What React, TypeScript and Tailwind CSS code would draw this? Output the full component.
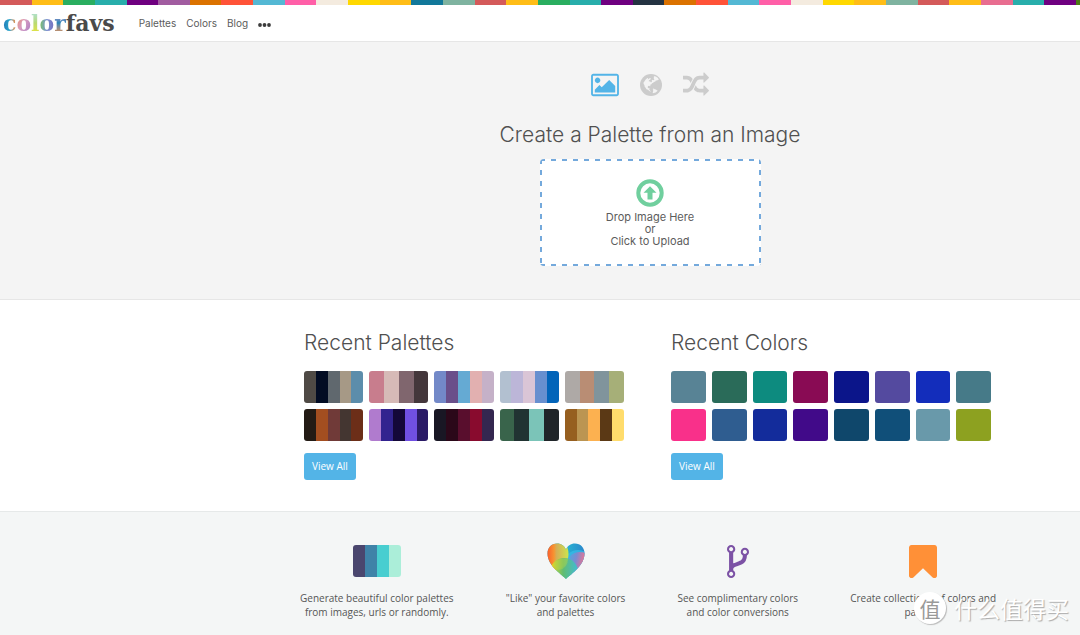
import type { ReactNode } from "react";

const stripe = [
  "#d45a5a", "#ffbd17", "#2aae60", "#28aeab", "#6f0080", "#a15ca0", "#db7200", "#ff5338", "#54b8d4",
  "#ff5fa8", "#f4ebdf", "#ffd800", "#ffbd17", "#12789a", "#7fb3a0", "#d45a5a", "#ffbd17", "#2aae60",
  "#28aeab", "#6f0080", "#243342", "#db7200", "#ff5338", "#54b8d4", "#ff5fa8", "#f4ebdf", "#ffd800",
  "#ffbd17", "#7fb3a0", "#d45a5a", "#ffbd17", "#e86d90", "#28aeab", "#6f0080",
];

const palettes = [
  ["#4f4a45", "#020c23", "#60686e", "#a69986", "#5c8dab"],
  ["#c87d8d", "#d6bab7", "#80666e", "#44373b"],
  ["#7389c8", "#6a4f8a", "#65aad3", "#e2b0b0", "#c5b1c8"],
  ["#b2c0d0", "#bcb6d8", "#dac5d6", "#678fcf", "#0264b9"],
  ["#aea9a6", "#b98d74", "#80949c", "#a6af78"],
  ["#231b15", "#a34e20", "#703a38", "#443631", "#6c2e18"],
  ["#b07bce", "#32238f", "#140839", "#7050e3", "#2a1a66"],
  ["#191724", "#2b0819", "#590e2d", "#890b2e", "#342750"],
  ["#39644b", "#213332", "#7bc4b8", "#202529"],
  ["#965f20", "#bb9552", "#fcb150", "#5b3915", "#ffdc6c"],
];

const colors = [
  "#588395", "#2a6b59", "#0d8b7f", "#890b54", "#0b158a", "#544a9f", "#132dbb", "#467a88",
  "#f9308a", "#2f5d90", "#132c9b", "#410a89", "#0f476b", "#104f79", "#6999aa", "#8da120",
];

const logoLetters = [
  { char: "c", fill: "bg-linear-to-r from-[#2479b8] via-[#29a5c9] to-[#f48a24]" },
  { char: "o", fill: "bg-linear-to-br from-[#f48a24] via-[#d79bc0] to-[#a477c4]" },
  { char: "l", fill: "bg-linear-to-b from-[#aee0df] via-[#b9da72] to-[#eee51d]" },
  { char: "o", fill: "bg-linear-to-r from-[#7dc544] via-[#7b92d0] to-[#7671c0]" },
  { char: "r", fill: "bg-linear-to-b from-[#c499d2] via-[#2283b7] to-[#f68a1f]" },
];

const PictureIcon = () => (
  <svg viewBox="0 0 1920 1792" className="h-[26px] w-7" fill="currentColor" aria-hidden="true">
    <path d="M640 576q0 80-56 136t-136 56-136-56-56-136 56-136 136-56 136 56 56 136zm1024 384v448h-1408v-192l320-320 160 160 512-512zm96-704h-1600q-13 0-22.500 9.500t-9.500 22.500v1216q0 13 9.500 22.500t22.500 9.500h1600q13 0 22.500-9.500t9.500-22.500v-1216q0-13-9.500-22.500t-22.500-9.500zm160 32v1216q0 66-47 113t-113 47h-1600q-66 0-113-47t-47-113v-1216q0-66 47-113t113-47h1600q66 0 113 47t47 113z" />
  </svg>
);

const GlobeIcon = () => (
  <svg viewBox="128 0 1536 1792" className="h-[26px] w-[22px]" aria-hidden="true">
    <circle cx="896" cy="896" r="768" fill="currentColor" />
    <path
      fill="#f4f4f4"
      d="M1100 285q60-15 130 15 155 75 225 225l-70 5-55 50-95 10-35 55-100 35-50 65-85 35-30 65-75 20-20 60 25 45-45 20-55-45-75 25-25 80 30 65 75-10 30 45-25 75 60 75 50 15-15 40-95-35-80-85-115-50-60-100-65-75-20-110-55-75-5-100 60-80 90-135 120-95 60 10-35 65 70-10 50-60 65-10 30 60-60 60-80 45-5 55 105 20 45 65 70-45-15-80 60-60 80 35 50-50-45-60zM1010 1175l75-40 65 50 85 20 75 60 55 25q-125 145-335 185l-15-60 35-75-10-55 20-50z"
    />
  </svg>
);

const RandomIcon = () => (
  <svg viewBox="0 0 1792 1792" className="size-[26px]" fill="currentColor" aria-hidden="true">
    <path d="M666 481q-60 92-137 273-22-45-37-72.500t-40.500-63.500-51-56.500-63-35-81.500-14.500h-224q-14 0-23-9t-9-23v-192q0-14 9-23t23-9h224q250 0 410 225zm1126 799q0 14-9 23l-320 320q-9 9-23 9-13 0-22.500-9.500t-9.500-22.500v-192q-32 0-85 .5t-81 1-73-1-71-5-64-10.500-63-18.500-58-28.500-59-40-55-53.500-56-69.500q59-93 136-273 22 45 37 72.500t40.500 63.500 51 56.500 63 35 81.500 14.500h256v-192q0-14 9-23t23-9q12 0 24 10l319 319q9 9 9 23zm0-896q0 14-9 23l-320 320q-9 9-23 9-13 0-22.500-9.500t-9.500-22.500v-192h-256q-48 0-87 15t-69 45-51 61.500-45 77.500q-32 62-78 171-29 66-49.500 111t-54 105-64 100-74 83-90 68.500-106.500 42-128 16.500h-224q-14 0-23-9t-9-23v-192q0-14 9-23t23-9h224q48 0 87-15t69-45 51-61.500 45-77.500q32-62 78-171 29-66 49.500-111t54-105 64-100 74-83 90-68.500 106.500-42 128-16.500h256v-192q0-14 9-23t23-9q12 0 24 10l319 319q9 9 9 23z" />
  </svg>
);

const UploadIcon = () => (
  <svg viewBox="0 0 28 28" className="size-7 text-[#70cf9e]" fill="currentColor" aria-hidden="true">
    <circle cx="14" cy="14" r="11.700" fill="none" stroke="currentColor" strokeWidth="4" />
    <path d="M14 7.200l6.500 6.600h-4v6.700h-5v-6.700h-4z" />
  </svg>
);

const PaletteIcon = () => (
  <svg viewBox="0 0 48 32" className="h-8 w-12" aria-hidden="true">
    <clipPath id="palette-clip">
      <rect width="48" height="32" rx="3" />
    </clipPath>
    <g clipPath="url(#palette-clip)">
      <path fill="#4a466e" d="M0 0h12v32H0z" />
      <path fill="#3f83a8" d="M12 0h12v32H12z" />
      <path fill="#48ced0" d="M24 0h12v32H24z" />
      <path fill="#abeed9" d="M36 0h12v32H36z" />
    </g>
  </svg>
);

const HeartIcon = () => (
  <svg viewBox="0 0 38 36" className="h-9 w-[38px]" aria-hidden="true">
    <defs>
      <clipPath id="heart-clip">
        <path d="M19 36C13 30 .5 22.500.5 10.500.5 4.500 4.500.5 10 .5c4.500 0 7.500 2.500 9 6 1.500-3.500 4.500-6 9-6 5.500 0 9.500 4 9.500 10C37.500 22.500 25 30 19 36z" />
      </clipPath>
      <linearGradient id="heart-warm" gradientUnits="userSpaceOnUse" x1="0" y1="0" x2="21" y2="0">
        <stop offset="0" stopColor="#fb5b2b" />
        <stop offset=".33" stopColor="#f79431" />
        <stop offset=".45" stopColor="#d5ae55" />
        <stop offset="1" stopColor="#cbe34e" />
      </linearGradient>
      <linearGradient id="heart-cool" gradientUnits="userSpaceOnUse" x1="19" y1="0" x2="38" y2="0">
        <stop offset="0" stopColor="#27b4d2" />
        <stop offset="1" stopColor="#2a85cc" />
      </linearGradient>
      <linearGradient id="heart-pink" gradientUnits="userSpaceOnUse" x1="19" y1="12" x2="38" y2="16">
        <stop offset="0" stopColor="#3eb1e6" />
        <stop offset=".55" stopColor="#7c8bd0" />
        <stop offset="1" stopColor="#f0738f" />
      </linearGradient>
      <linearGradient id="heart-green" gradientUnits="userSpaceOnUse" x1="4" y1="22" x2="31" y2="22">
        <stop offset="0" stopColor="#f0df16" />
        <stop offset=".45" stopColor="#68bd67" />
        <stop offset="1" stopColor="#36c3d5" />
      </linearGradient>
    </defs>
    <g clipPath="url(#heart-clip)">
      <path fill="url(#heart-cool)" d="M0 0h38v36H0z" />
      <circle cx="31" cy="21" r="14" fill="#38bde9" opacity=".7" />
      <circle cx="33" cy="23" r="14" fill="url(#heart-pink)" />
      <ellipse cx="8" cy="11" rx="13.500" ry="16" fill="url(#heart-warm)" />
      <circle cx="17" cy="29" r="14" fill="url(#heart-green)" opacity=".9" />
      <path fill="#b5d84a" opacity=".4" d="M6 21a14 14 0 0 1 15-5q0 9-9 11-4-1-6-6z" />
    </g>
  </svg>
);

const ForkIcon = () => (
  <svg viewBox="384 128 1024 1536" className="h-[33px] w-[22px] text-[#7c52a5]" fill="currentColor" aria-hidden="true">
    <path d="M672 1472q0-40-28-68t-68-28-68 28-28 68 28 68 68 28 68-28 28-68zm0-1152q0-40-28-68t-68-28-68 28-28 68 28 68 68 28 68-28 28-68zm640 128q0-40-28-68t-68-28-68 28-28 68 28 68 68 28 68-28 28-68zm96 0q0 52-26 96.500t-70 69.500q-2 287-226 414-67 38-203 81-128 40-169.500 71t-41.500 100v26q44 25 70 69.500t26 96.500q0 80-56 136t-136 56-136-56-56-136q0-52 26-96.500t70-69.500v-820q-44-25-70-69.500t-26-96.500q0-80 56-136t136-56 136 56 56 136q0 52-26 96.500t-70 69.500v497q54-26 154-57 55-17 87.500-29.500t70.500-31 59-39.500 40.500-51 28-69.500 8.500-91.500q-44-25-70-69.500t-26-96.500q0-80 56-136t136-56 136 56 56 136z" />
  </svg>
);

const BookmarkIcon = () => (
  <svg viewBox="256 128 1280 1504" className="h-[33px] w-7 text-[#ff9037]" fill="currentColor" aria-hidden="true">
    <path d="M1420 128q23 0 44 9 33 13 52.500 41t19.500 62v1289q0 34-19.500 62t-52.500 41q-19 8-44 8-48 0-83-32l-441-424-441 424q-36 33-83 33-23 0-44-9-33-13-52.500-41t-19.500-62v-1289q0-34 19.500-62t52.500-41q21-9 44-9h1048z" />
  </svg>
);

const Header = () => (
  <header className="border-b border-[#e6e6e6] bg-white">
    <div className="flex h-[5px]">
      {stripe.map((color, i) => (
        <span key={i} className="flex-1" style={{ backgroundColor: color }} />
      ))}
      <span className="w-1 bg-[#4b7a14]" />
    </div>
    <div className="flex h-9 items-center gap-6 pl-[3px]">
      <a href="/" className="flex font-['DejaVu_Serif',serif] text-[22px] leading-6 font-bold text-[#4a4a4a]">
        {logoLetters.map((letter, i) => (
          <span key={i} className={`${letter.fill} bg-clip-text text-transparent`}>{letter.char}</span>
        ))}
        <span>favs</span>
      </a>
      <nav className="flex items-center gap-2.5 font-[Inter,sans-serif] text-[10px] leading-4 text-[#5c5c5c]">
        <a href="/palettes">Palettes</a>
        <a href="/colors">Colors</a>
        <a href="/blog">Blog</a>
        <button type="button" aria-label="More" className="pt-[3px]">
          <svg viewBox="0 0 13 4" className="h-1 w-[13px]" fill="#3c3c3c">
            <circle cx="2" cy="2" r="1.900" />
            <circle cx="6.500" cy="2" r="1.900" />
            <circle cx="11" cy="2" r="1.900" />
          </svg>
        </button>
      </nav>
    </div>
  </header>
);

const Hero = () => (
  <section className="flex flex-col items-center border-b border-[#e6e6e6] bg-[#f4f4f4] pt-[30px] pb-[33px] pl-[220px] font-[Inter,sans-serif] text-[#505050]">
    <div className="flex gap-[21px] text-[#cccccc]">
      <button type="button" aria-label="From an image" className="text-[#53b4e7]"><PictureIcon /></button>
      <button type="button" aria-label="From a URL"><GlobeIcon /></button>
      <button type="button" aria-label="Random"><RandomIcon /></button>
    </div>
    <h1 className="mt-[25px] text-[21px] leading-6 font-light">Create a Palette from an Image</h1>
    <label className="mt-3 flex h-[107px] w-[221px] cursor-pointer flex-col items-center rounded-[4px] bg-white bg-[repeating-linear-gradient(90deg,#74a9dc_0_5px,transparent_5px_11px),repeating-linear-gradient(90deg,#74a9dc_0_5px,transparent_5px_11px),repeating-linear-gradient(#74a9dc_0_5px,transparent_5px_11px),repeating-linear-gradient(#74a9dc_0_5px,transparent_5px_11px)] bg-[size:100%_2px,100%_2px,2px_100%,2px_100%] bg-[position:top,bottom,left,right] bg-no-repeat pt-5">
      <UploadIcon />
      <span className="mt-1 text-center text-[11px] leading-3 text-[#5c5c5c]">
        Drop Image Here<br />or<br />Click to Upload
      </span>
      <input type="file" accept="image/*" className="sr-only" />
    </label>
  </section>
);

const RecentBlock = ({ title, href, children }: { title: string; href: string; children: ReactNode }) => (
  <section className="pr-[26px] pl-[21px]">
    <h2 className="font-[Inter,sans-serif] text-[21px] leading-6 font-light text-[#505050]">{title}</h2>
    {children}
    <a
      href={href}
      className="mt-3 inline-block rounded-[3px] bg-[#53b4e7] px-2 font-['Open_Sans',sans-serif] text-[10px] leading-[27px] font-medium text-white"
    >
      View All
    </a>
  </section>
);

const Recent = () => (
  <main className="border-b border-[#e6e9e9] bg-white pt-[31px] pb-[31px] pl-[220px]">
    <div className="mx-auto grid max-w-[734px] grid-cols-2">
      <RecentBlock title="Recent Palettes" href="/palettes">
        <div className="mt-4 grid grid-cols-5 gap-1.5">
          {palettes.map((palette, i) => (
            <a key={i} href="/palettes" aria-label="Palette" className="flex h-8 overflow-hidden rounded-[3px]">
              {palette.map((color) => (
                <span key={color} className="flex-1" style={{ backgroundColor: color }} />
              ))}
            </a>
          ))}
        </div>
      </RecentBlock>
      <RecentBlock title="Recent Colors" href="/colors">
        <div className="mt-4 grid grid-cols-8 gap-1.5">
          {colors.map((color) => (
            <a key={color} href="/colors" aria-label={color} className="h-8 rounded-[3px]" style={{ backgroundColor: color }} />
          ))}
        </div>
      </RecentBlock>
    </div>
  </main>
);

const Feature = ({ icon, children }: { icon: ReactNode; children: ReactNode }) => (
  <div className="flex flex-col items-center">
    <div className="flex h-9 items-center">{icon}</div>
    <p className="mt-3 text-center">{children}</p>
  </div>
);

const Features = () => (
  <footer className="flex-1 bg-[#f4f6f6] pt-[31px] pb-2 pl-[220px] font-['Open_Sans',sans-serif] text-[10px] leading-[14px] text-[#555]">
    <div className="mx-auto flex max-w-[734px] justify-between pr-[21px] pl-[17px]">
      <Feature icon={<PaletteIcon />}>Generate beautiful color palettes<br />from images, urls or randomly.</Feature>
      <Feature icon={<HeartIcon />}>"Like" your favorite colors<br />and palettes</Feature>
      <Feature icon={<ForkIcon />}>See complimentary colors<br />and color conversions</Feature>
      <Feature icon={<BookmarkIcon />}>Create collections of colors and<br />palettes</Feature>
    </div>
  </footer>
);

const Watermark = () => (
  <div className="absolute right-[11px] bottom-[11px] flex items-center gap-2 font-['Noto_Sans_CJK_SC',sans-serif]">
    <span className="flex size-8 items-center justify-center rounded-full bg-white text-[21px] leading-8 text-[#999] shadow-[1px_1px_1px_#bbb]">
      值
    </span>
    <span className="text-[23px] leading-8 text-white [text-shadow:1px_1px_1px_#aaa]">什么值得买</span>
  </div>
);

const App = () => (
  <div className="relative flex min-h-screen flex-col overflow-hidden">
    <Header />
    <Hero />
    <Recent />
    <Features />
    <Watermark />
  </div>
);

export default App;
